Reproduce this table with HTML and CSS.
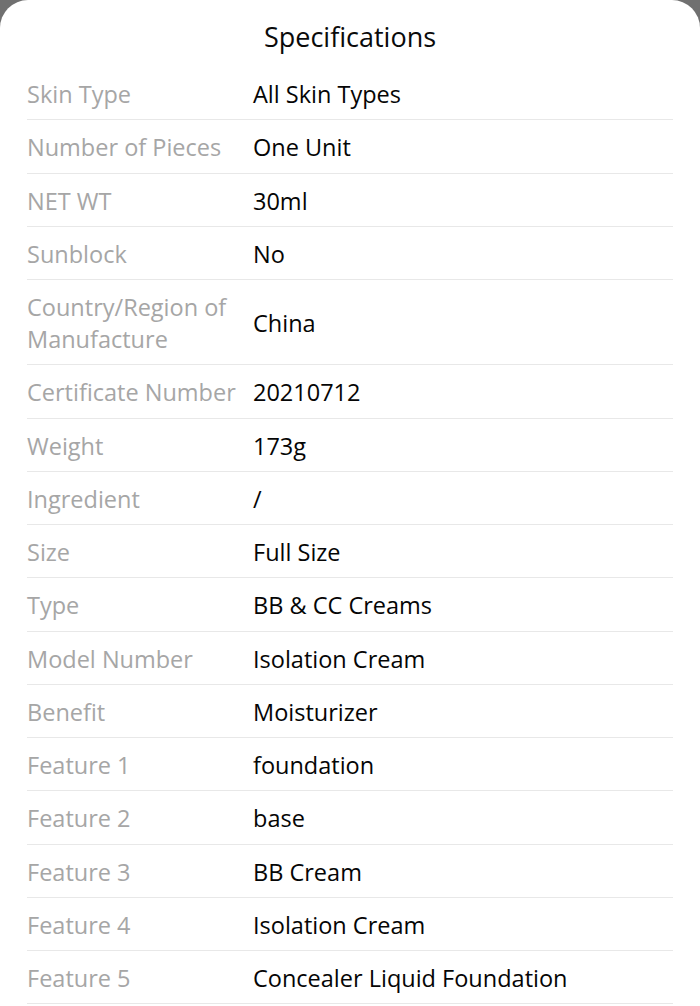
FILE: index.html
```html
<!DOCTYPE html>
<html lang="en">
<head>
  <meta charset="UTF-8">
  <meta name="viewport" content="width=device-width, initial-scale=1.0">
  <title>Specifications</title>
  <link rel="stylesheet" href="styles.css">
</head>
<body>
  <div class="sheet">
    <h1 class="sheet-title">Specifications</h1>
    <div class="spec-list">
      <div class="spec-row"><div class="spec-label">Skin Type</div><div class="spec-value">All Skin Types</div></div>
      <div class="spec-row"><div class="spec-label">Number of Pieces</div><div class="spec-value">One Unit</div></div>
      <div class="spec-row"><div class="spec-label">NET WT</div><div class="spec-value">30ml</div></div>
      <div class="spec-row"><div class="spec-label">Sunblock</div><div class="spec-value">No</div></div>
      <div class="spec-row"><div class="spec-label">Country/Region of Manufacture</div><div class="spec-value">China</div></div>
      <div class="spec-row"><div class="spec-label">Certificate Number</div><div class="spec-value">20210712</div></div>
      <div class="spec-row"><div class="spec-label">Weight</div><div class="spec-value">173g</div></div>
      <div class="spec-row"><div class="spec-label">Ingredient</div><div class="spec-value">/</div></div>
      <div class="spec-row"><div class="spec-label">Size</div><div class="spec-value">Full Size</div></div>
      <div class="spec-row"><div class="spec-label">Type</div><div class="spec-value">BB &amp; CC Creams</div></div>
      <div class="spec-row"><div class="spec-label">Model Number</div><div class="spec-value">Isolation Cream</div></div>
      <div class="spec-row"><div class="spec-label">Benefit</div><div class="spec-value">Moisturizer</div></div>
      <div class="spec-row"><div class="spec-label">Feature 1</div><div class="spec-value">foundation</div></div>
      <div class="spec-row"><div class="spec-label">Feature 2</div><div class="spec-value">base</div></div>
      <div class="spec-row"><div class="spec-label">Feature 3</div><div class="spec-value">BB Cream</div></div>
      <div class="spec-row"><div class="spec-label">Feature 4</div><div class="spec-value">Isolation Cream</div></div>
      <div class="spec-row"><div class="spec-label">Feature 5</div><div class="spec-value">Concealer Liquid Foundation</div></div>
    </div>
  </div>
</body>
</html>
```

FILE: styles.css
```css
html, body {
  margin: 0;
  padding: 0;
  background-color: #707070;
  height: 100%;
}
body {
  font-family: "Open Sans", Arial, sans-serif;
  overflow: hidden;
}
.sheet {
  background-color: white;
  border-radius: 28px 28px 0 0;
  min-height: 100%;
  padding: 0 27px;
}
.sheet-title {
  margin: 0;
  padding-top: 18px;
  height: 49px;
  font-size: 27px;
  font-weight: normal;
  line-height: 38px;
  text-align: center;
  color: #0a0a0a;
}
.spec-row {
  display: flex;
  align-items: center;
  padding: 11px 0 9.25px;
  border-bottom: 1px solid #e8e8e8;
  font-size: 23.5px;
  line-height: 32px;
}
.spec-label {
  width: 226px;
  flex-shrink: 0;
  color: #a6a6a6;
}
.spec-value {
  color: #050505;
}
```
